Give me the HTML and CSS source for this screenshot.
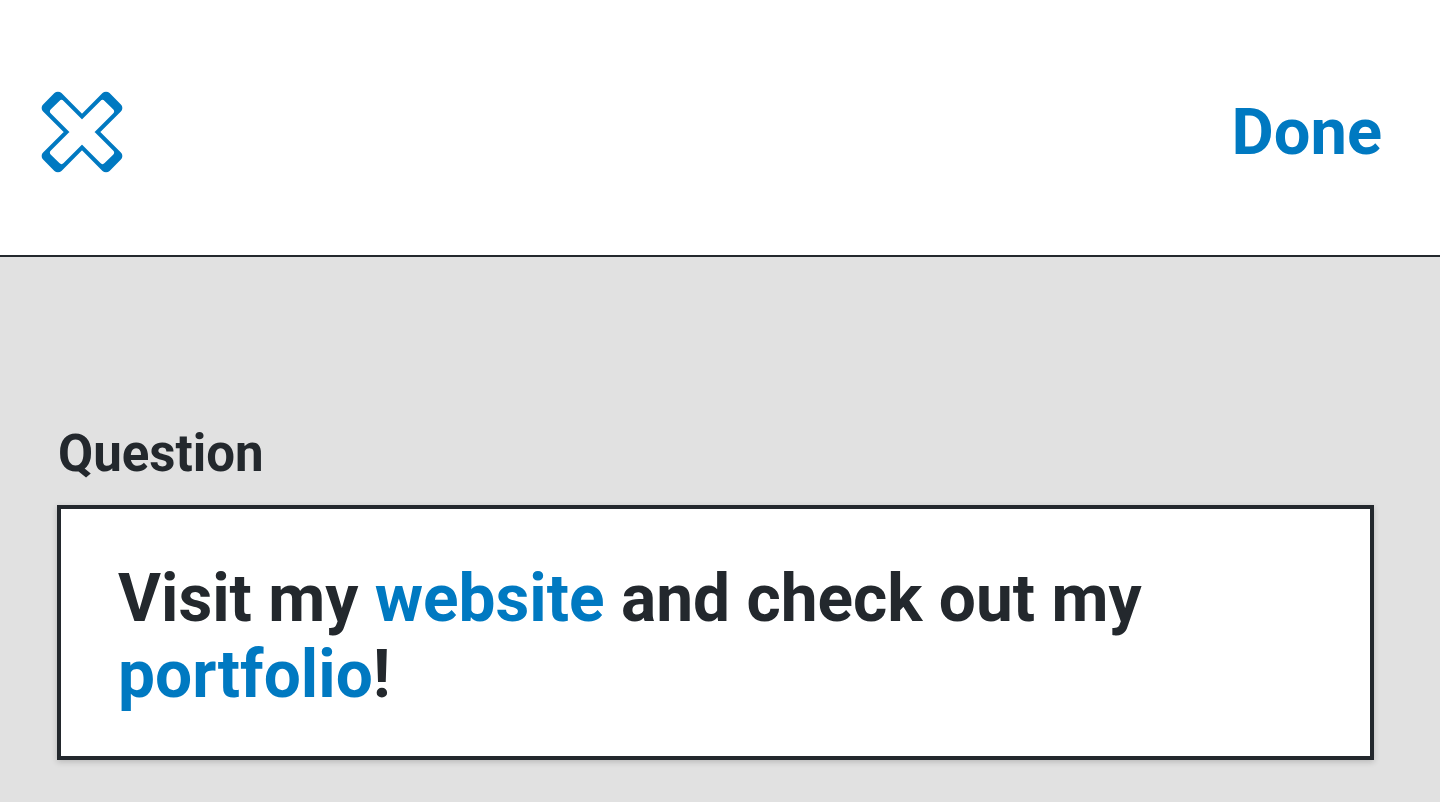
FILE: index.html
```html
<!DOCTYPE html>
<html lang="en">
<head>
<meta charset="utf-8">
<title>Question</title>
<link rel="stylesheet" href="styles.css">
</head>
<body>
<header class="topbar">
  <button class="close" aria-label="Close">
    <svg width="82" height="82" viewBox="-41 -41 82 82">
      <path d="M0 -11.31 L24.04 -35.36 L35.36 -24.04 L11.31 0 L35.36 24.04 L24.04 35.36 L0 11.31 L-24.04 35.36 L-35.36 24.04 L-11.31 0 L-35.36 -24.04 L-24.04 -35.36 Z" fill="#0079c1" stroke="#0079c1" stroke-width="10" stroke-linejoin="round"/>
      <path d="M0 -8.49 L20.51 -28.99 L28.99 -20.51 L8.49 0 L28.99 20.51 L20.51 28.99 L0 8.49 L-20.51 28.99 L-28.99 20.51 L-8.49 0 L-28.99 -20.51 L-20.51 -28.99 Z" fill="#fff" stroke="#fff" stroke-width="6" stroke-linejoin="round"/>
    </svg>
  </button>
  <button class="done">Done</button>
</header>
<main class="content">
  <label class="label">Question</label>
  <div class="field">
    <p class="field-text">Visit my <a href="#" class="link">website</a> and check out my <a href="#" class="link">portfolio</a>!</p>
  </div>
</main>
</body>
</html>
```
FILE: styles.css
```css
* { box-sizing: border-box; }
html, body { margin: 0; padding: 0; }
body {
  width: 1440px;
  height: 802px;
  overflow: hidden;
  background: #e1e1e1;
  font-family: Roboto, "Noto Sans", sans-serif;
  color: #23282d;
}
.topbar {
  height: 257px;
  background: #fff;
  border-bottom: 2px solid #23282d;
  display: flex;
  align-items: center;
  justify-content: space-between;
  padding: 8px 58px 0 41px;
}
.close {
  border: 0;
  background: none;
  padding: 0;
  width: 82px;
  height: 82px;
  display: flex;
  cursor: pointer;
}
.done {
  border: 0;
  background: none;
  padding: 0;
  font-family: Roboto, sans-serif;
  font-weight: 700;
  font-size: 65px;
  color: #0079c1;
  cursor: pointer;
}
.content {
  padding: 168px 66px 0 57px;
}
.label {
  display: block;
  font-weight: 700;
  font-size: 51px;
  line-height: 58px;
  margin: 0 0 22px 1px;
}
.field {
  background: #fff;
  border: 4px solid #23282d;
  box-shadow: 0 2px 6px rgba(0, 0, 0, 0.18);
  padding: 52px 57px 40px;
  height: 255px;
}
.field-text {
  margin: 0;
  font-weight: 700;
  font-size: 65.8px;
  line-height: 76px;
}
.link {
  color: #0079c1;
  text-decoration: none;
}
```
